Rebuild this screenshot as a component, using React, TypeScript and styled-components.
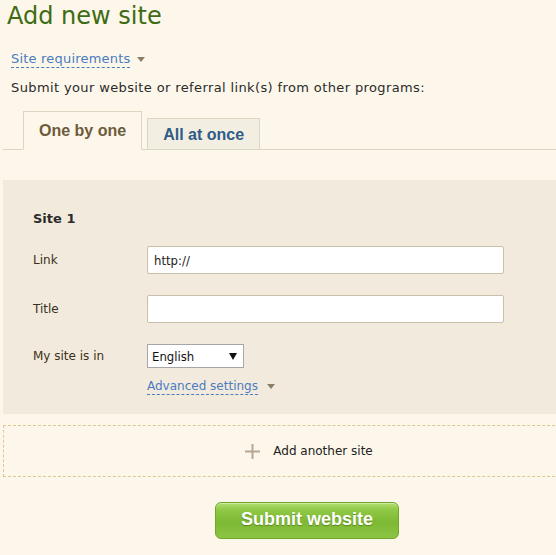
import React from "react";
import styled, { createGlobalStyle } from "styled-components";

const Global = createGlobalStyle`
  html, body { margin: 0; padding: 0; background: #fcf7ea; }
  body { overflow: hidden; width: 556px; height: 555px; font-family: "DejaVu Sans", Verdana, sans-serif; }
`;

const Page = styled.div`
  width: 612px;
  padding-left: 3px;
`;

const Heading = styled.h1`
  margin: 0;
  padding: 0 0 0 4px;
  height: 34px;
  line-height: 32px;
  font-size: 24px;
  font-weight: normal;
  color: #3e6b13;
`;

const Requirements = styled.div`
  margin-top: 16px;
  padding-left: 8px;
  display: flex;
  align-items: center;
  gap: 7px;
  height: 18px;
`;

const DashedLink = styled.a<{ $small?: boolean }>`
  font-size: ${(p) => (p.$small ? "12px" : "13px")};
  letter-spacing: ${(p) => (p.$small ? "0" : "0.2px")};
  line-height: 16px;
  color: #4b7bc1;
  text-decoration: none;
  border-bottom: 1px dashed #4b7bc1;
  cursor: pointer;
`;

const Caret = styled.span`
  width: 0;
  height: 0;
  border-left: 4px solid transparent;
  border-right: 4px solid transparent;
  border-top: 5px solid #8b7e68;
`;

const Intro = styled.p`
  margin: 11px 0 0;
  padding-left: 8px;
  font-size: 13px;
  letter-spacing: 0.38px;
  line-height: 18px;
  color: #2b2b2b;
`;

const Tabs = styled.div`
  margin-top: 14px;
  display: flex;
  align-items: flex-end;
  gap: 5px;
  padding-left: 20px;
  border-bottom: 1px solid #ddd6c3;
`;

const Tab = styled.div<{ $active?: boolean }>`
  box-sizing: border-box;
  margin-bottom: -1px;
  padding: 0 15px 0 15px;
  font-family: "Liberation Sans", Arial, sans-serif;
  font-weight: bold;
  font-size: 16px;
  display: flex;
  align-items: center;
  border: 1px solid #ddd6c3;
  height: ${(p) => (p.$active ? "39px" : "32px")};
  background: ${(p) => (p.$active ? "#fcf7ea" : "#f3eee2")};
  border-bottom-color: ${(p) => (p.$active ? "#fcf7ea" : "#ddd6c3")};
  color: ${(p) => (p.$active ? "#6d5b3c" : "#2f5b88")};
  padding-top: ${(p) => (p.$active ? "1px" : "2px")};
`;

const Panel = styled.div`
  margin-top: 30px;
  background: #f2ebdd;
  padding: 31px 30px 19px;
`;

const SiteTitle = styled.div`
  font-size: 13px;
  font-weight: bold;
  line-height: 16px;
  color: #2b2b2b;
  margin-bottom: 19px;
`;

const Row = styled.div`
  display: grid;
  grid-template-columns: 114px 357px;
  align-items: center;
  margin-bottom: 21px;
`;

const Label = styled.label`
  font-family: "DejaVu Sans", Tahoma, sans-serif;
  font-size: 12px;
  color: #3a3020;
`;

const Input = styled.input`
  box-sizing: border-box;
  height: 28px;
  width: 357px;
  border: 1px solid #c9c0ab;
  border-radius: 2px;
  background: #fff;
  padding: 0 6px;
  font-family: "DejaVu Sans Condensed", Tahoma, sans-serif;
  font-size: 13px;
  color: #222;
  outline: none;
`;

const Select = styled.div`
  box-sizing: border-box;
  width: 97px;
  height: 24px;
  border: 1px solid #a6a6a6;
  background: #fff;
  display: flex;
  align-items: center;
  justify-content: space-between;
  padding: 0 6px 0 4px;
  font-family: "DejaVu Sans Condensed", Tahoma, sans-serif;
  font-size: 13px;
  color: #111;
`;

const SelectArrow = styled.span`
  width: 0;
  height: 0;
  border-left: 4px solid transparent;
  border-right: 4px solid transparent;
  border-top: 7px solid #111;
`;

const Advanced = styled.div`
  margin-left: 114px;
  margin-top: -11px;
  display: flex;
  align-items: center;
  gap: 9px;
`;

const AddBox = styled.div`
  margin-top: 11px;
  box-sizing: border-box;
  height: 52px;
  border: 1px dashed #dcc890;
  display: flex;
  align-items: center;
  justify-content: center;
  gap: 13px;
  font-family: "DejaVu Sans", Tahoma, sans-serif;
  font-size: 12px;
  color: #222;
`;

const ButtonWrap = styled.div`
  margin-top: 25px;
  display: flex;
  justify-content: center;
  padding-right: 4px;
`;

const SubmitButton = styled.button`
  box-sizing: border-box;
  width: 184px;
  height: 37px;
  border: 1px solid #6ea628;
  border-radius: 6px;
  background: linear-gradient(#b2df6e 0%, #8fc846 20%, #7db933 55%, #8dc444 100%);
  box-shadow: inset 0 1px 0 rgba(255, 255, 255, 0.4);
  color: #fff;
  font-family: "Liberation Sans", Arial, sans-serif;
  font-weight: bold;
  font-size: 18px;
  text-shadow: 0 1px 1px rgba(60, 100, 10, 0.6);
  cursor: pointer;
  padding: 0 0 2px;
`;

const Plus = () => (
  <svg width="15" height="15" viewBox="0 0 15 15">
    <path d="M7.5 0v15M0 7.5h15" stroke="#b5a794" strokeWidth="2" />
  </svg>
);

export default function App() {
  return (
    <>
      <Global />
      <Page>
        <Heading>Add new site</Heading>
        <Requirements>
          <DashedLink>Site requirements</DashedLink>
          <Caret />
        </Requirements>
        <Intro>Submit your website or referral link(s) from other programs:</Intro>
        <Tabs>
          <Tab $active>One by one</Tab>
          <Tab>All at once</Tab>
        </Tabs>
        <Panel>
          <SiteTitle>Site 1</SiteTitle>
          <Row>
            <Label>Link</Label>
            <Input defaultValue="http://" />
          </Row>
          <Row>
            <Label>Title</Label>
            <Input />
          </Row>
          <Row>
            <Label>My site is in</Label>
            <Select>
              English
              <SelectArrow />
            </Select>
          </Row>
          <Advanced>
            <DashedLink $small>Advanced settings</DashedLink>
            <Caret />
          </Advanced>
        </Panel>
        <AddBox>
          <Plus />
          <span>Add another site</span>
        </AddBox>
        <ButtonWrap>
          <SubmitButton>Submit website</SubmitButton>
        </ButtonWrap>
      </Page>
    </>
  );
}
